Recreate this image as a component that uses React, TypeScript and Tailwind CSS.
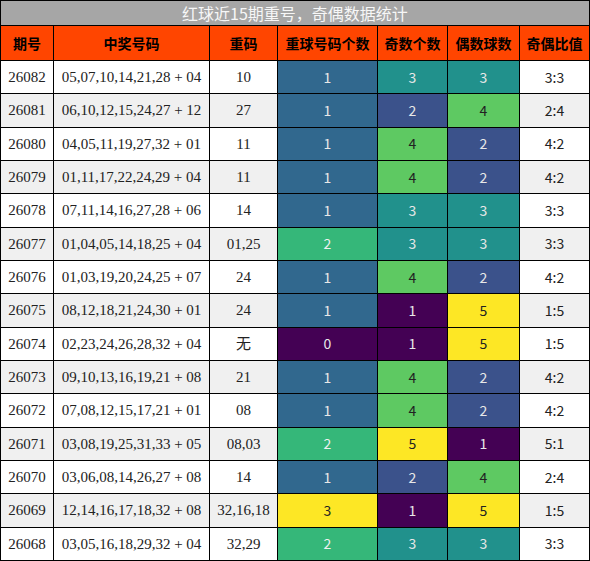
const rows: [string, string, string, number, number, number][] = [
  ["26082", "05,07,10,14,21,28 + 04", "10", 1, 3, 3],
  ["26081", "06,10,12,15,24,27 + 12", "27", 1, 2, 4],
  ["26080", "04,05,11,19,27,32 + 01", "11", 1, 4, 2],
  ["26079", "01,11,17,22,24,29 + 04", "11", 1, 4, 2],
  ["26078", "07,11,14,16,27,28 + 06", "14", 1, 3, 3],
  ["26077", "01,04,05,14,18,25 + 04", "01,25", 2, 3, 3],
  ["26076", "01,03,19,20,24,25 + 07", "24", 1, 4, 2],
  ["26075", "08,12,18,21,24,30 + 01", "24", 1, 1, 5],
  ["26074", "02,23,24,26,28,32 + 04", "无", 0, 1, 5],
  ["26073", "09,10,13,16,19,21 + 08", "21", 1, 4, 2],
  ["26072", "07,08,12,15,17,21 + 01", "08", 1, 4, 2],
  ["26071", "03,08,19,25,31,33 + 05", "08,03", 2, 5, 1],
  ["26070", "03,06,08,14,26,27 + 08", "14", 1, 2, 4],
  ["26069", "12,14,16,17,18,32 + 08", "32,16,18", 3, 1, 5],
  ["26068", "03,05,16,18,29,32 + 04", "32,29", 2, 3, 3],
];

// viridis steps
const repeatColor: Record<number, string> = {
  0: "bg-[#440154] text-[#e8e8e8]",
  1: "bg-[#31688e] text-[#e8e8e8]",
  2: "bg-[#35b779] text-[#f0f0f0]",
  3: "bg-[#fde725] text-[#222222]",
};

const countColor: Record<number, string> = {
  1: "bg-[#440154] text-[#e8e8e8]",
  2: "bg-[#3b528b] text-[#e8e8e8]",
  3: "bg-[#21918c] text-[#e8e8e8]",
  4: "bg-[#5ec962] text-[#222222]",
  5: "bg-[#fde725] text-[#222222]",
};

const headers = ["期号", "中奖号码", "重码", "重球号码个数", "奇数个数", "偶数球数", "奇偶比值"];

const serif = "font-['Liberation_Serif','Noto_Sans_CJK_SC',serif] text-[15px] text-[#222222]";
const sans = "font-['Noto_Sans_CJK_SC',sans-serif] text-[14px]";

export default function App() {
  return (
    <div className="grid h-[561px] w-[590px] grid-cols-[52px_155px_67px_99px_69px_71px_69px] grid-rows-[24px_34px_repeat(15,minmax(0,1fr))] gap-px bg-black p-px">
      <div className="col-span-7 flex items-center justify-center bg-[#a6a6a6] font-['Noto_Sans_CJK_SC',sans-serif] text-[16px] text-[#f7f7f7]">
        红球近15期重号，奇偶数据统计
      </div>
      {headers.map((h) => (
        <div
          key={h}
          className="flex items-center justify-center bg-[#ff4500] font-['Noto_Sans_CJK_SC',sans-serif] text-[14px] font-bold text-black"
        >
          {h}
        </div>
      ))}
      {rows.map(([id, nums, rep, r, odd, even], i) => {
        const bg = i % 2 === 0 ? "bg-white" : "bg-[#f0f0f0]";
        return [
          <div key={id + "a"} className={`flex items-center justify-center ${bg} ${serif}`}>{id}</div>,
          <div key={id + "b"} className={`flex items-center justify-center ${bg} ${serif}`}>{nums}</div>,
          <div key={id + "c"} className={`flex items-center justify-center ${bg} ${serif}`}>{rep}</div>,
          <div key={id + "d"} className={`flex items-center justify-center ${repeatColor[r]} ${sans}`}>{r}</div>,
          <div key={id + "e"} className={`flex items-center justify-center ${countColor[odd]} ${sans}`}>{odd}</div>,
          <div key={id + "f"} className={`flex items-center justify-center ${countColor[even]} ${sans}`}>{even}</div>,
          <div key={id + "g"} className={`flex items-center justify-center ${bg} ${sans} text-[#222222]`}>
            {odd}:{even}
          </div>,
        ];
      })}
    </div>
  );
}
